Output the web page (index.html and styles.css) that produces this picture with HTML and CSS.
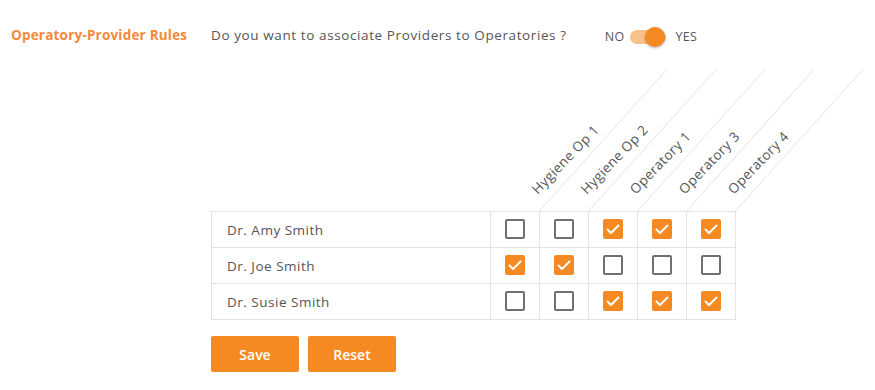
FILE: index.html
```html
<!DOCTYPE html>
<html>
<head>
    <meta charset="utf-8">
    <title>Operatory-Provider Rules</title>
    <link rel="stylesheet" href="styles.css">
</head>
<body>
    <div class="top">
        <h2 class="title">Operatory-Provider Rules</h2>
        <span class="question">Do you want to associate Providers to Operatories ?</span>
        <div class="switch">
            <span>NO</span>
            <span class="track"><span class="knob"></span></span>
            <span>YES</span>
        </div>
    </div>

    <div class="content">
        <table class="matrix">
            <colgroup>
                <col class="col-name">
                <col class="col-op">
                <col class="col-op">
                <col class="col-op">
                <col class="col-op">
                <col class="col-op">
            </colgroup>
            <thead>
                <tr>
                    <th class="blank"></th>
                    <th class="op"><div class="op-head"><div class="slant"></div><span class="lbl">Hygiene Op 1</span></div></th>
                    <th class="op"><div class="op-head"><div class="slant"></div><span class="lbl">Hygiene Op 2</span></div></th>
                    <th class="op"><div class="op-head"><div class="slant"></div><span class="lbl">Operatory 1</span></div></th>
                    <th class="op"><div class="op-head"><div class="slant"></div><span class="lbl">Operatory 3</span></div></th>
                    <th class="op"><div class="op-head"><div class="slant"></div><span class="lbl">Operatory 4</span></div></th>
                </tr>
            </thead>
            <tbody>
                <tr>
                    <td class="name">Dr. Amy Smith</td>
                    <td><span class="cb"></span></td>
                    <td><span class="cb"></span></td>
                    <td><span class="cb on"></span></td>
                    <td><span class="cb on"></span></td>
                    <td><span class="cb on"></span></td>
                </tr>
                <tr>
                    <td class="name">Dr. Joe Smith</td>
                    <td><span class="cb on"></span></td>
                    <td><span class="cb on"></span></td>
                    <td><span class="cb"></span></td>
                    <td><span class="cb"></span></td>
                    <td><span class="cb"></span></td>
                </tr>
                <tr>
                    <td class="name">Dr. Susie Smith</td>
                    <td><span class="cb"></span></td>
                    <td><span class="cb"></span></td>
                    <td><span class="cb on"></span></td>
                    <td><span class="cb on"></span></td>
                    <td><span class="cb on"></span></td>
                </tr>
            </tbody>
        </table>

        <div class="actions">
            <button type="button" class="button">Save</button>
            <button type="button" class="button">Reset</button>
        </div>
    </div>
</body>
</html>
```

FILE: styles.css
```css
body {
    font-family: "Open Sans", Arial, sans-serif;
    color: #555;
    margin: 0;
    padding: 0;
    background: #fff;
}
.top {
    display: flex;
    align-items: center;
    height: 20px;
    padding: 25px 0 0 11px;
}
.title {
    width: 200px;
    margin: 0;
    font-size: 13.5px;
    font-weight: 700;
    letter-spacing: 0.2px;
    color: #f5893a;
}
.question {
    font-size: 13.5px;
    letter-spacing: 0.6px;
    color: #555;
}
.switch {
    display: flex;
    align-items: center;
    margin-left: 38px;
    margin-top: 3px;
    font-size: 12.5px;
    letter-spacing: 0.3px;
    color: #555;
}
.track {
    display: flex;
    justify-content: flex-end;
    align-items: center;
    width: 36px;
    height: 14px;
    margin: 0 9px 0 6px;
    border-radius: 7px;
    background-color: #f9c28d;
}
.knob {
    width: 20px;
    height: 20px;
    margin-right: 1px;
    border-radius: 50%;
    background-color: #f48a21;
    box-shadow: 0 1px 3px rgba(0, 0, 0, 0.3);
}
.content {
    padding: 24px 0 0 211px;
}
.matrix {
    width: 525px;
    border-collapse: collapse;
    table-layout: fixed;
}
.col-name {
    width: 279px;
}
.col-op {
    width: 49px;
}
.matrix th {
    padding: 0;
}
.matrix th.op {
    height: 142px;
    vertical-align: bottom;
}
.op-head {
    display: grid;
    grid-template-columns: 49px;
    height: 142px;
}
.slant {
    grid-area: 1 / 1;
    border-right: 1px solid #e3e3e3;
    transform-origin: bottom left;
    transform: skewX(-42deg);
}
.lbl {
    grid-area: 1 / 1;
    align-self: end;
    justify-self: start;
    white-space: nowrap;
    font-size: 13.5px;
    font-weight: 400;
    letter-spacing: 0.4px;
    line-height: 16px;
    color: #555;
    transform-origin: bottom left;
    transform: translate(49px, -14px) rotate(-46deg);
}
.matrix td {
    height: 35px;
    padding: 0;
    border: 1px solid #e3e3e3;
    text-align: center;
    vertical-align: middle;
}
.matrix td.name {
    padding-left: 15px;
    text-align: left;
    font-size: 13.5px;
    letter-spacing: 0.5px;
    color: #555;
}
.cb {
    display: inline-block;
    box-sizing: border-box;
    width: 20px;
    height: 20px;
    margin-top: 3px;
    border: 2px solid #707070;
    border-radius: 2px;
}
.cb.on {
    border-color: #f48a21;
    background: #f48a21 url("data:image/svg+xml;utf8,<svg xmlns='http://www.w3.org/2000/svg' viewBox='0 0 20 20'><path d='M4.5 10.5l3.5 3.5 7.5-7.5' fill='none' stroke='white' stroke-width='2' stroke-linecap='round' stroke-linejoin='round'/></svg>") center / 20px 20px no-repeat;
}
.actions {
    display: flex;
    gap: 9px;
    margin-top: 16px;
}
.button {
    width: 88px;
    height: 36px;
    font-family: "Open Sans", Arial, sans-serif;
    font-size: 14px;
    font-weight: 600;
    color: #fff;
    background-color: #f48a21;
    border: none;
    border-radius: 2px;
    cursor: pointer;
}
```
